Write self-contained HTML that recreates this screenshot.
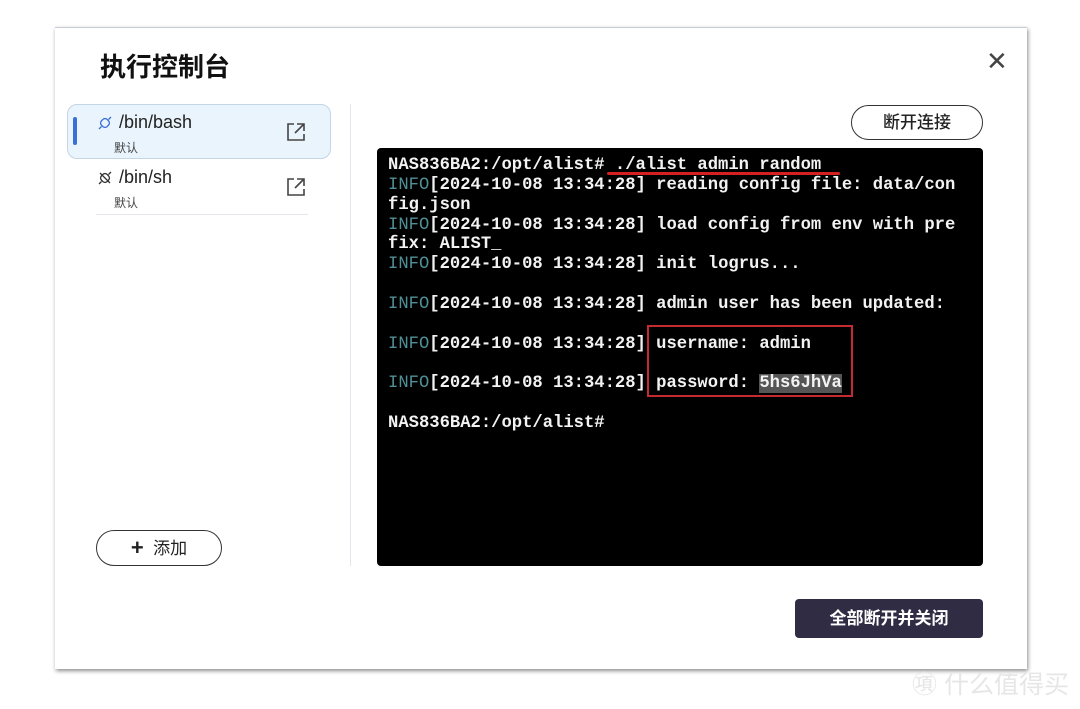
<!DOCTYPE html>
<html><head><meta charset="utf-8"><style>
*{margin:0;padding:0;box-sizing:border-box}
body{width:1080px;height:709px;background:#fff;position:relative;overflow:hidden;font-family:"Liberation Sans","Noto Sans CJK SC",sans-serif}
.dlg{position:absolute;left:55px;top:27px;width:972px;height:642px;background:#fff;border-top:1px solid #c8ccd4;box-shadow:1px 2px 4px rgba(0,0,0,.45)}
.title{position:absolute;left:100px;top:47px;font-size:26px;color:#111;font-weight:bold}
.close{position:absolute;left:986px;top:46px;font-size:26px;color:#444}
.sel{position:absolute;left:67px;top:104px;width:264px;height:55px;background:#eaf4fc;border:1px solid #c2d6e6;border-radius:10px}
.bar{position:absolute;left:73px;top:117px;width:4px;height:28px;background:#3a6fd8;border-radius:2px}
.it{position:absolute;font-size:18px;color:#222}
.sub{position:absolute;font-size:12px;color:#444}
.sep{position:absolute;left:96px;top:214px;width:212px;height:1px;background:#e3e6ea}
.vl{position:absolute;left:350px;top:104px;width:1px;height:462px;background:#e3e6ea}
.add{position:absolute;left:96px;top:530px;width:126px;height:36px;border:1px solid #333;border-radius:18px;font-size:17px;color:#222;text-align:center;line-height:34px}
.disc{position:absolute;left:851px;top:105px;width:132px;height:35px;border:1px solid #333;border-radius:18px;font-size:17px;color:#222;text-align:center;line-height:33px;font-weight:500}
.term{position:absolute;left:377px;top:148px;width:606px;height:418px;background:#000;border-radius:4px}
pre{position:absolute;left:388px;top:156px;font-family:"Liberation Mono",monospace;font-weight:bold;font-size:17.2px;line-height:19.85px;color:#f2f2f2}
.i{color:#4f8f95;font-weight:normal}
.hl{background:#555}
.ul{position:absolute;left:607px;top:172px;width:233px;height:3px;background:#d42020;border-radius:2px}
.box{position:absolute;left:647px;top:325px;width:206px;height:72px;border:2px solid #c42a30}
.all{position:absolute;left:795px;top:599px;width:188px;height:39px;background:#2f2c44;border-radius:4px;color:#fff;font-size:17px;text-align:center;line-height:39px;font-weight:bold}
.wm{position:absolute;left:912px;top:665px;font-size:25px;color:#e6e6e6}
</style></head><body>
<div class="dlg"></div>
<div class="title">执行控制台</div>
<div class="close">✕</div>
<div class="sel"></div><div class="bar"></div>
<svg style="position:absolute;left:97px;top:115px" width="16" height="16" viewBox="0 0 16 16" fill="none" stroke="#3a6fd8" stroke-width="1.3"><rect x="4" y="4" width="8" height="8" rx="3" transform="rotate(45 8 8)"/><path d="M2 14L4.5 11.5M11.5 4.5L14 2"/></svg>
<div class="it" style="left:119px;top:112px">/bin/bash</div>
<div class="sub" style="left:114px;top:139px">默认</div>
<svg style="position:absolute;left:286px;top:122px" width="20" height="20" viewBox="0 0 20 20" fill="none" stroke="#444" stroke-width="1.6"><path d="M8 2H2V18H18V12 M11 2H18V9 M18 2L9 11"/></svg>
<svg style="position:absolute;left:97px;top:170px" width="16" height="16" viewBox="0 0 16 16" fill="none" stroke="#333" stroke-width="1.3"><rect x="4" y="4" width="8" height="8" rx="3" transform="rotate(45 8 8)"/><path d="M2 14L4.5 11.5M11.5 4.5L14 2M3 3L13 13"/></svg>
<div class="it" style="left:119px;top:167px">/bin/sh</div>
<div class="sub" style="left:114px;top:194px">默认</div>
<svg style="position:absolute;left:286px;top:177px" width="20" height="20" viewBox="0 0 20 20" fill="none" stroke="#444" stroke-width="1.6"><path d="M8 2H2V18H18V12 M11 2H18V9 M18 2L9 11"/></svg>
<div class="sep"></div><div class="vl"></div>
<div class="add"><b style="font-size:22px;vertical-align:-1px">+</b>&nbsp; 添加</div>
<div class="disc">断开连接</div>
<div class="term"></div>
<pre>NAS836BA2:/opt/alist# ./alist admin random
<span class="i">INFO</span>[2024-10-08 13:34:28] reading config file: data/con
fig.json
<span class="i">INFO</span>[2024-10-08 13:34:28] load config from env with pre
fix: ALIST_
<span class="i">INFO</span>[2024-10-08 13:34:28] init logrus...

<span class="i">INFO</span>[2024-10-08 13:34:28] admin user has been updated:

<span class="i">INFO</span>[2024-10-08 13:34:28] username: admin

<span class="i">INFO</span>[2024-10-08 13:34:28] password: <span class="hl">5hs6JhVa</span>

NAS836BA2:/opt/alist#</pre>
<div class="ul"></div>
<div class="box"></div>
<div class="all">全部断开并关闭</div>
<div class="wm">㊠ 什么值得买</div>
</body></html>
